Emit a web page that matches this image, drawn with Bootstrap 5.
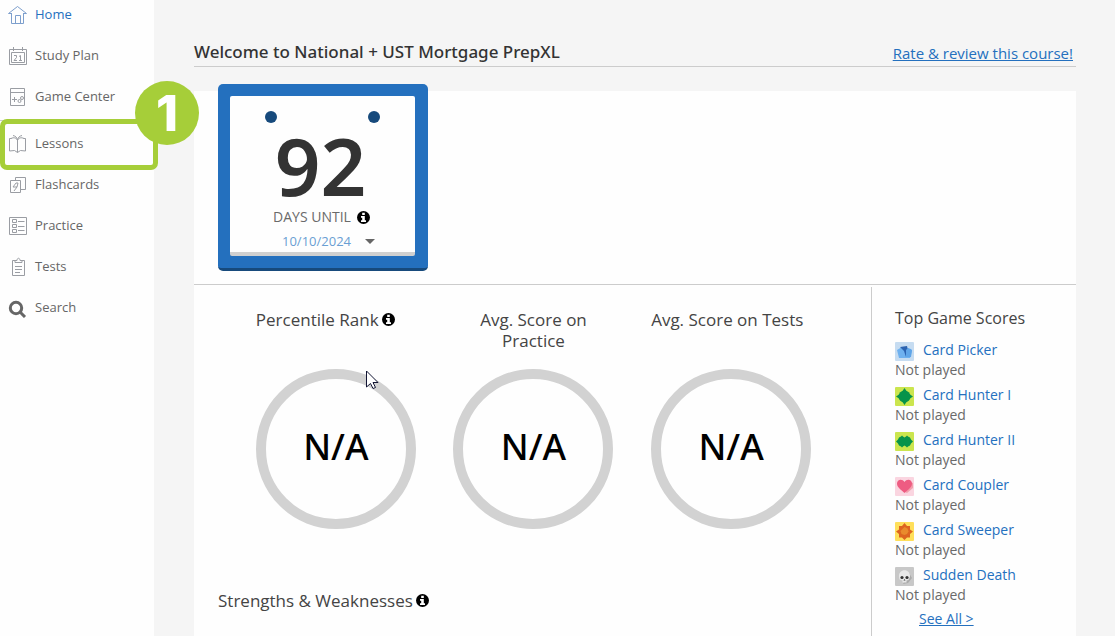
<!DOCTYPE html>
<html lang="en">
<head>
<meta charset="utf-8">
<meta name="viewport" content="width=device-width, initial-scale=1">
<title>National + UST Mortgage PrepXL</title>
<link href="https://cdn.jsdelivr.net/npm/bootstrap@5.3.0/dist/css/bootstrap.min.css" rel="stylesheet">
<style>
  body { font-family: "Open Sans", "Noto Sans", sans-serif; font-size: 14px; line-height: 20px; background: #f5f5f5; color: #6a6a6a; }
  a { color: #2470be; }
  .side { width: 154px; background: #fefefe; padding-top: 4px; }
  .side ul { display: flex; flex-direction: column; gap: 21px; }
  .side ul + ul { border-top: 1px solid #ccc; margin-top: 14px; padding-top: 12px; }
  .side a { display: flex; gap: 8px; padding-left: 8px; font-size: 13px; color: #666; text-decoration: none; }
  .side a.active { color: #2470be; }
  .side svg { flex: none; width: 19px; height: 20px; margin: 1px 0 -1px; fill: none; stroke: #9a9da3; stroke-width: 1; }
  .side .active svg { stroke: #7d9fcd; }
  .callout-box { position: absolute; left: 0; top: -14px; width: 158px; height: 51px; border: 5px solid #a6ce39; border-radius: 7px; pointer-events: none; z-index: 2; }
  .callout-num { position: absolute; right: -46px; top: -43px; width: 64px; height: 64px; border-radius: 50%; background: #a6ce39; color: #fff; font: 800 50px/64px Inter, sans-serif; text-align: center; }
  .content { padding: 40px 39px 0 40px; }
  .page-head { border-bottom: 1px solid #ccc; height: 27px; }
  .page-head h1 { font-family: "Noto Sans", sans-serif; font-size: 17px; line-height: 24px; font-weight: 500; color: #333; }
  .page-head a { font-size: 15px; line-height: 24px; margin: 1px 3px 0 0; }
  .panel { background: #fefefe; margin-top: 24px; }
  .top-area { padding: 0 24px 13px; border-bottom: 1px solid #ccc; }
  .calendar { width: 210px; margin-top: -7px; background: #2470be; border-bottom: 3px solid #174a7c; border-radius: 5px; padding: 12px 13px 12px 12px; }
  .sheet { background: #fefefe; border-bottom: 4px solid #d0d0d0; border-radius: 2px; height: 160px; padding-top: 15px; text-align: center; position: relative; }
  .holes { display: flex; justify-content: space-between; padding: 0 35px; }
  .holes span { width: 12px; height: 12px; border-radius: 50%; background: #174a7c; }
  .days { font-family: "Noto Sans", sans-serif; font-size: 80px; line-height: 84px; font-weight: 600; color: #333; padding-right: 4px; }
  .until { font-size: 14px; line-height: 20px; gap: 6px; padding-right: 2px; }
  .date-pick { border: 0; background: none; padding: 0; font-size: 13px; line-height: 20px; color: #6a9fd3; display: flex; align-items: center; gap: 14px; margin: 4px 0 0 52px; }
  .date-pick i { border: 5px solid transparent; border-top-color: #666; border-bottom: 0; }
  .info { width: 13px; height: 13px; }
  .stats { padding: 24px 0 20px; }
  .gauges { padding: 0 41px 0 43px; }
  .gauge { width: 160px; margin: 0 auto; text-align: center; }
  h2 { font-size: 17px; line-height: 21px; font-weight: 400; color: #444; margin: 0; }
  .gauge h2 { min-height: 60px; }
  .ring { height: 160px; border: 10px solid #d2d2d2; border-radius: 50%; display: flex; align-items: center; justify-content: center; font-family: "Noto Sans", sans-serif; font-size: 36px; line-height: 48px; font-weight: 500; color: #000; position: relative; padding-bottom: 4px; }
  .pointer { position: absolute; left: 100px; top: -9px; width: 14px; height: 20px; }
  .strengths { gap: 3px; margin: 61px 24px 0; }
  .rank { gap: 3px; }
  .scores { width: 205px; margin-top: 2px; border-left: 1px solid #ccc; padding: 21px 0 0 23px; }
  .scores li { margin-bottom: 5px; }
  .scores li:last-child { margin-bottom: 4px; }
  .scores li a { display: flex; gap: 8px; text-decoration: none; }
  .scores svg { width: 20px; height: 19px; margin: 2px 0 -1px; }
  .scores h2 { font-size: 16px; line-height: 20px; margin-bottom: 12px; }
</style>
</head>
<body>
<svg class="d-none">
  <symbol id="i-info" viewBox="0 0 13 13"><circle cx="6.500" cy="6.500" r="6.500" fill="#000"/><path fill="#fff" d="M5.200 1.800h2.600v2.200H5.200zM4 5h3.800v4.300H9v1.700H4V9.300h1.200V6.700H4z"/></symbol>
</svg>
<div class="d-flex min-vh-100">
  <nav class="side flex-shrink-0">
    <ul class="list-unstyled mb-0">
      <li><a class="active" href="#"><svg viewBox="0 0 19 20"><path d="M.5 8.500 9.500 1.500l9 7M.5 8.500h3M15.500 8.500h3M3.500 8v10.500h12V8M7.500 18.500v-8h5v8"/></svg>Home</a></li>
      <li><a href="#"><svg viewBox="0 0 19 20"><path d="M1.500 3.500h17v15h-17zM3.500 6.500h13v10h-13zM5.500 1v4M14.500 1v4M6 9.500h2.500v2L6 14.500h3M11 10.500l1.500-1v5M11 14.500h3"/></svg>Study Plan</a></li>
      <li><a href="#"><svg viewBox="0 0 19 20"><path d="M2.500 1.500h14v17h-14zM2.500 5.500h14M4 12.500h5M6.500 10v5"/><circle cx="14" cy="11" r="1.500"/><circle cx="11.500" cy="14" r="1.500"/></svg>Game Center</a></li>
    </ul>
    <ul class="list-unstyled mb-0">
      <li class="position-relative"><a href="#"><svg viewBox="0 0 19 20"><path d="M3.500 4.500h-2v12.500l5-.5 3 2 3-2 5 .5V4.500h-2M9.500 6v12.500M9.500 6C8 4 6 3 3 4.500M9.500 6C11 4 13 3 16 4.500M9.500 6C9 3.500 7.500 2 5 1.500M9.500 6c.5-2.500 2-4 4.500-4.500"/></svg>Lessons</a>
        <div class="callout-box"><span class="callout-num">1</span></div></li>
      <li><a href="#"><svg viewBox="0 0 19 20"><path d="M7.500 5V2.500h10v12h-5M2.500 5.500h10v12h-10zM8 8l-3 4h4l-3 4M8 8h2l-1 4"/></svg>Flashcards</a></li>
      <li><a href="#"><svg viewBox="0 0 19 20"><path d="M1.500 1.500h17v17h-17zM4.500 3.500h4v3h-4zM4.500 8.500h4v3h-4zM4.500 13.500h4v3h-4zM10 5.500h6.500M10 10.500h6.500M10 14.500h6.500"/></svg>Practice</a></li>
      <li><a href="#"><svg viewBox="0 0 19 20"><path d="M7 3.500H4.500v15h12v-15H14M7 5.500v-2h2c0-3 3-3 3 0h2v2zM7 9.500h7M7 12.500h7M7 15.500h5"/></svg>Tests</a></li>
      <li><a href="#"><svg viewBox="0 0 19 20"><g stroke="#666" stroke-width="3"><circle cx="8" cy="10" r="5.700"/><path d="m12 14 5 5"/></g></svg>Search</a></li>
    </ul>
  </nav>

  <main class="content flex-grow-1 d-flex flex-column">
    <header class="page-head d-flex justify-content-between">
      <h1 class="m-0">Welcome to National + UST Mortgage PrepXL</h1>
      <a href="#">Rate &amp; review this course!</a>
    </header>
    <div class="panel flex-grow-1 d-flex flex-column">
      <section class="top-area">
        <div class="calendar">
          <div class="sheet">
            <div class="holes"><span></span><span></span></div>
            <div class="days">92</div>
            <div class="until d-flex justify-content-center align-items-center">DAYS UNTIL <svg class="info"><use href="#i-info"/></svg></div>
            <button class="date-pick" type="button">10/10/2024<i></i></button>
          </div>
        </div>
      </section>
      <div class="d-flex flex-grow-1">
        <section class="stats flex-grow-1">
          <div class="gauges row g-0">
            <div class="col-4"><div class="gauge">
              <h2 class="rank d-flex align-items-start"><span>Percentile Rank</span><svg class="info mt-1"><use href="#i-info"/></svg></h2>
              <div class="ring">N/A<svg class="pointer" viewBox="0 0 14 20"><path d="M.5 1v16l4-3.500 2.500 5 2.500-1-2.500-5h5z" fill="#fff" stroke="#111433"/></svg></div>
            </div></div>
            <div class="col-4"><div class="gauge">
              <h2>Avg. Score on Practice</h2>
              <div class="ring">N/A</div>
            </div></div>
            <div class="col-4"><div class="gauge">
              <h2 class="text-start">Avg. Score on Tests</h2>
              <div class="ring">N/A</div>
            </div></div>
          </div>
          <h2 class="strengths d-flex align-items-center">Strengths &amp; Weaknesses<svg class="info"><use href="#i-info"/></svg></h2>
        </section>
        <aside class="scores flex-shrink-0">
          <h2>Top Game Scores</h2>
          <ul class="list-unstyled m-0">
            <li><a href="#"><svg viewBox="0 0 20 19"><rect width="19" height="19" rx="1" fill="#c6dcf1"/><path fill="#6fb1ef" d="m2 8 5-3 9 2 1 2-2 7H4z"/><path fill="#2b62b0" d="m5 5 7-1 2 8-3 3-2-6z"/><path fill="#5fa5e8" d="m11 8 2-2 4 2-1 7h-5z"/></svg>Card Picker</a>Not played</li>
            <li><a href="#"><svg viewBox="0 0 20 19"><rect width="19" height="19" rx="1" fill="#cbe54e"/><circle cx="9.500" cy="9.500" r="6" fill="#07934a"/><path fill="#07934a" d="m9.500 1 2 3h-4zM9.500 18l2-3h-4zM1 9.500l3-2v4zM18 9.500l-3-2v4z"/></svg>Card Hunter I</a>Not played</li>
            <li><a href="#"><svg viewBox="0 0 20 19"><rect width="19" height="19" rx="1" fill="#cbe54e"/><path fill="#07934a" d="m1 9.500 2-2 1-2 2-1 1-1 1 1 1.500 1 1.500-1 1-1 1 1 2 1 1 2 2 2-2 2-1 2-2 1-1 1-1-1-1.500-1-1.500 1-1 1-1-1-2-1-1-2z"/></svg>Card Hunter II</a>Not played</li>
            <li><a href="#"><svg viewBox="0 0 20 19"><rect width="19" height="19" rx="1" fill="#fad5e0"/><path fill="#f2a0ad" d="m15 5 3 1v5l-6 5-2-1z"/><path fill="#ee5c82" d="M9.500 16C5 12 2 10 2 6.500 2 2 7.500 1.500 9.500 5 11.500 1.500 17 2 17 6.500 17 10 14 12 9.500 16z"/></svg>Card Coupler</a>Not played</li>
            <li><a href="#"><svg viewBox="0 0 20 19"><rect width="19" height="19" rx="1" fill="#ffdf5a"/><path fill="#dd6420" d="m9.500 1 2.500 3h3v3.500l3 2-3 2.500v3.500h-3l-2.500 2.500L7 15.500H4V12L1 9.500l3-2V4h3z"/><path fill="#e98a2c" d="m9.500 5 3 1.500 1 3-1.500 2.500-2.500 1-3-1-1-3z"/></svg>Card Sweeper</a>Not played</li>
            <li><a href="#"><svg viewBox="0 0 20 19"><rect width="19" height="19" rx="1" fill="#c8c8c8"/><path fill="#aaa" d="m14 6 3 5-4 5-5 1 2-4z"/><path fill="#e8e8e8" d="M4 10c-1-9 12-9 11 0l-1.500 3-2 .5v2h-4v-2l-3-1z"/><circle cx="7" cy="10.500" r="1.600" fill="#333"/><circle cx="12" cy="10.500" r="1.600" fill="#333"/><path d="m9.500 12 1 1.500h-2z" fill="#333"/></svg>Sudden Death</a>Not played</li>
          </ul>
          <a class="d-inline-block ms-4" href="#">See All &gt;</a>
        </aside>
      </div>
    </div>
  </main>
</div>
<script src="https://cdn.jsdelivr.net/npm/bootstrap@5.3.0/dist/js/bootstrap.bundle.min.js"></script>
</body>
</html>
